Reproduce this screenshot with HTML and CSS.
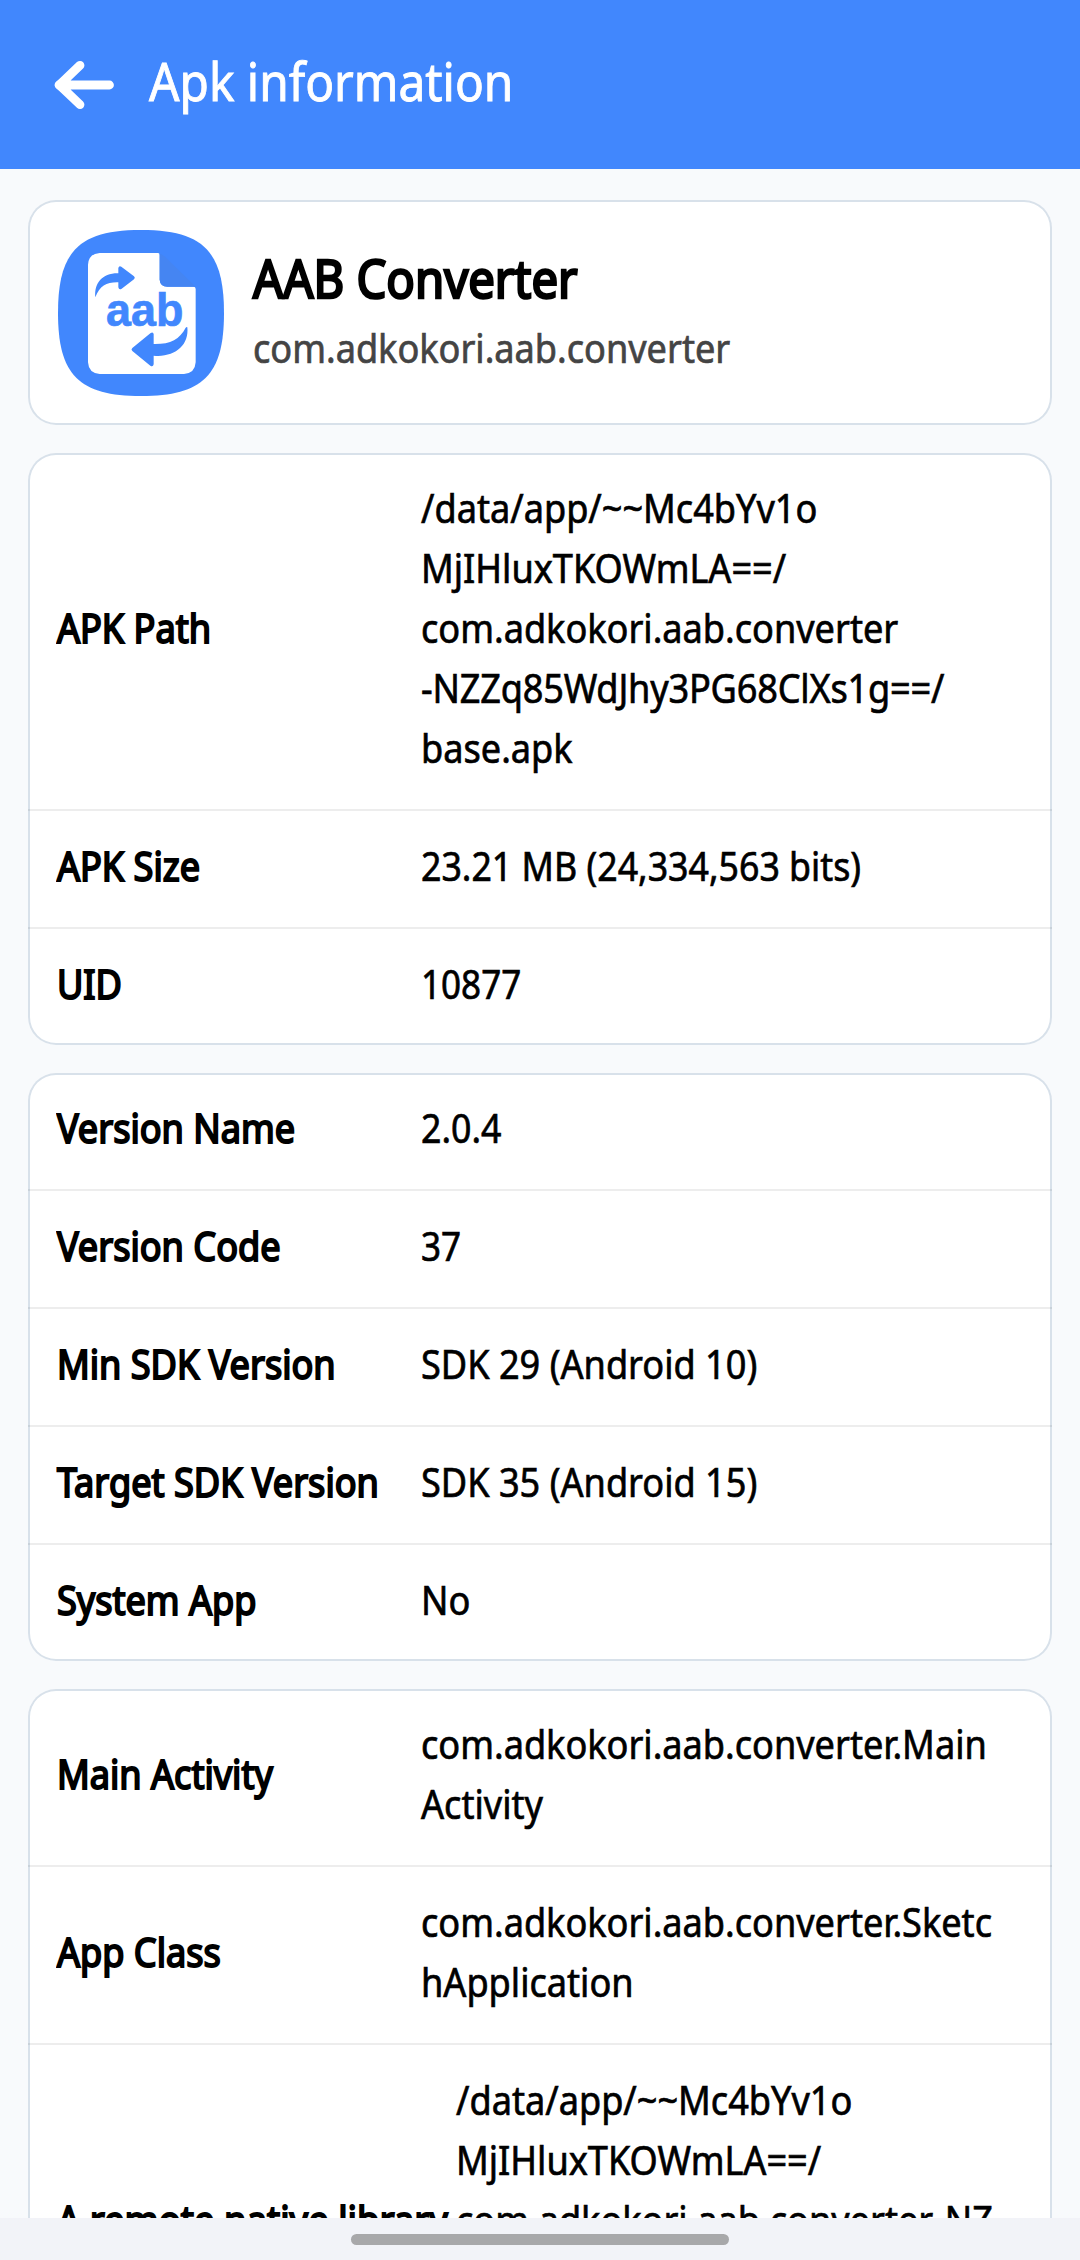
FILE: index.html
```html
<!DOCTYPE html>
<html lang="en">
<head>
<meta charset="utf-8">
<title>Apk information</title>
<link rel="stylesheet" href="styles.css">
</head>
<body>
<div class="screen">
  <header class="appbar">
    <svg class="back" viewBox="0 0 60 50" fill="none" stroke="#fff" stroke-width="8.8" stroke-linecap="round" stroke-linejoin="round"><path d="M55.5 25H8M26 5.3 5.4 25 26 44.6"/><path d="M5 25 12 20V30Z" fill="#fff"/></svg>
    <h1 class="appbar-title">Apk information</h1>
  </header>
  <main class="content">
    <section class="card app">
      <svg class="app-icon" viewBox="113 119 498 498">
        <path fill="#4187fd" d="M362 119C548 119 611 182 611 368S548 617 362 617 113 554 113 368 176 119 362 119Z"/>
        <path fill="#fff" d="M238 188H413Q418 188 418 194V268Q420 289 441 289H519Q526 289 526 296V516Q524 549 491 551H238Q205 549 203 516V223Q205 190 238 188Z"/>
        <path fill="#4585f2" d="M418 190Q428 192 440 205L526 289H441Q420 289 418 268Z"/>
        <path fill="#4187fd" d="M225 321C221 278 246 248 294 249V233Q296 225 303 229L341 258Q346 262 341 267L304 295Q296 300 294 291V276C260 275 238 286 225 321Z"/>
        <path fill="#4187fd" d="M501 411C507 465 463 502 400 496V522Q398 531 390 526L336 482Q331 477 336 473L390 429Q398 423 400 431V461C449 462 478 447 496 412Q500 408 501 411Z"/>
        <text class="app-icon-text" x="257" y="406" textLength="232" lengthAdjust="spacingAndGlyphs">aab</text>
      </svg>
      <div class="app-text">
        <h2 class="app-name">AAB Converter</h2>
        <p class="app-id">com.adkokori.aab.converter</p>
      </div>
    </section>

    <section class="card">
      <div class="row"><div class="label">APK Path</div><div class="value">/data/app/~~Mc4bYv1o<br>MjIHluxTKOWmLA==/<br>com.adkokori.aab.converter<br><span class="tight">-NZZq85WdJhy3PG68ClXs1g==/</span><br>base.apk</div></div>
      <div class="row"><div class="label">APK Size</div><div class="value mixed">23.21 MB (24,334,563 bits)</div></div>
      <div class="row"><div class="label">UID</div><div class="value digits">10877</div></div>
    </section>

    <section class="card">
      <div class="row"><div class="label">Version Name</div><div class="value mixed">2.0.4</div></div>
      <div class="row"><div class="label">Version Code</div><div class="value digits">37</div></div>
      <div class="row"><div class="label">Min SDK Version</div><div class="value">SDK 29 (Android 10)</div></div>
      <div class="row"><div class="label">Target SDK Version</div><div class="value">SDK 35 (Android 15)</div></div>
      <div class="row"><div class="label">System App</div><div class="value">No</div></div>
    </section>

    <section class="card">
      <div class="row"><div class="label">Main Activity</div><div class="value">com.adkokori.aab.converter.Main<br>Activity</div></div>
      <div class="row"><div class="label">App Class</div><div class="value">com.adkokori.aab.converter.Sketc<br>hApplication</div></div>
      <div class="row wide"><div class="label">A remote native library</div><div class="value">/data/app/~~Mc4bYv1o<br>MjIHluxTKOWmLA==/<br>com.adkokori.aab.converter-NZ</div></div>
    </section>
  </main>
  <footer class="navbar"><div class="handle"></div></footer>
</div>
</body>
</html>
```
FILE: styles.css
```css
* { box-sizing: border-box; }
html, body { margin: 0; height: 2260px; overflow: hidden; }
body {
  font-family: "Noto Sans", "Open Sans", sans-serif;
  color: #000;
  background: #f8fafc;
}
h1, h2, p { margin: 0; font-weight: 400; }
.screen { display: flex; flex-direction: column; height: 2260px; }
.appbar {
  flex: none;
  height: 169px;
  display: flex;
  align-items: center;
  gap: 35px;
  padding-left: 54px;
  background: #4187fd;
}
.back { width: 60px; height: 50px; }
.appbar-title {
  color: #fff;
  font-size: 52px;
  line-height: 70px;
  padding-bottom: 8px;
  transform: scaleX(.919);
  transform-origin: left;
  -webkit-text-stroke: .9px #fff;
}
.content { flex: 1; min-height: 0; overflow: hidden; display: flex; flex-direction: column; gap: 28px; padding: 31px 28px 0; }
.card {
  flex: none;
  background: #fff;
  border-radius: 28px;
  box-shadow: inset 0 0 0 2px #d8e1ea;
}
.app { display: flex; height: 225px; padding: 30px 29.5px; gap: 29.5px; }
.app-icon { width: 166px; height: 166px; flex: none; }
.app-icon-text { font: 700 138px "Liberation Sans", sans-serif; fill: #4187fd; stroke: #4187fd; stroke-width: 2px; }
.app-name {
  font-size: 53px;
  line-height: 72px;
  padding-top: 12px;
  transform: scaleX(.892);
  transform-origin: left;
  -webkit-text-stroke: 2.6px #000;
}
.app-id {
  font-size: 40px;
  line-height: 60px;
  padding-top: 4px;
  color: #444;
  transform: scaleX(.903);
  transform-origin: left;
  -webkit-text-stroke: .7px #444;
}
.row {
  display: grid;
  grid-template-columns: 365px 1fr;
  align-items: center;
  padding: 25px 28px 31px;
  font-size: 40px;
  line-height: 60px;
  white-space: nowrap;
}
.row:not(:last-child) { border-bottom: 2px solid rgba(0, 0, 0, .07); }
.wide { grid-template-columns: 400px 1fr; align-items: end; }
.label { padding-left: 1px; transform: scaleX(.903); transform-origin: left; -webkit-text-stroke: 2px #000; }
.wide .label { transform: scaleX(.912); }
.value { transform: scaleX(.903); transform-origin: left; -webkit-text-stroke: .7px #000; }
.value.mixed { transform: scaleX(.893); }
.value.digits { transform: scaleX(.876); }
.tight { letter-spacing: -.2px; }
.navbar { flex: none; height: 42px; background: #f2f3f8; display: flex; justify-content: center; padding-top: 16px; }
.handle { width: 378px; height: 11px; border-radius: 6px; background: #a8a8aa; }
```
